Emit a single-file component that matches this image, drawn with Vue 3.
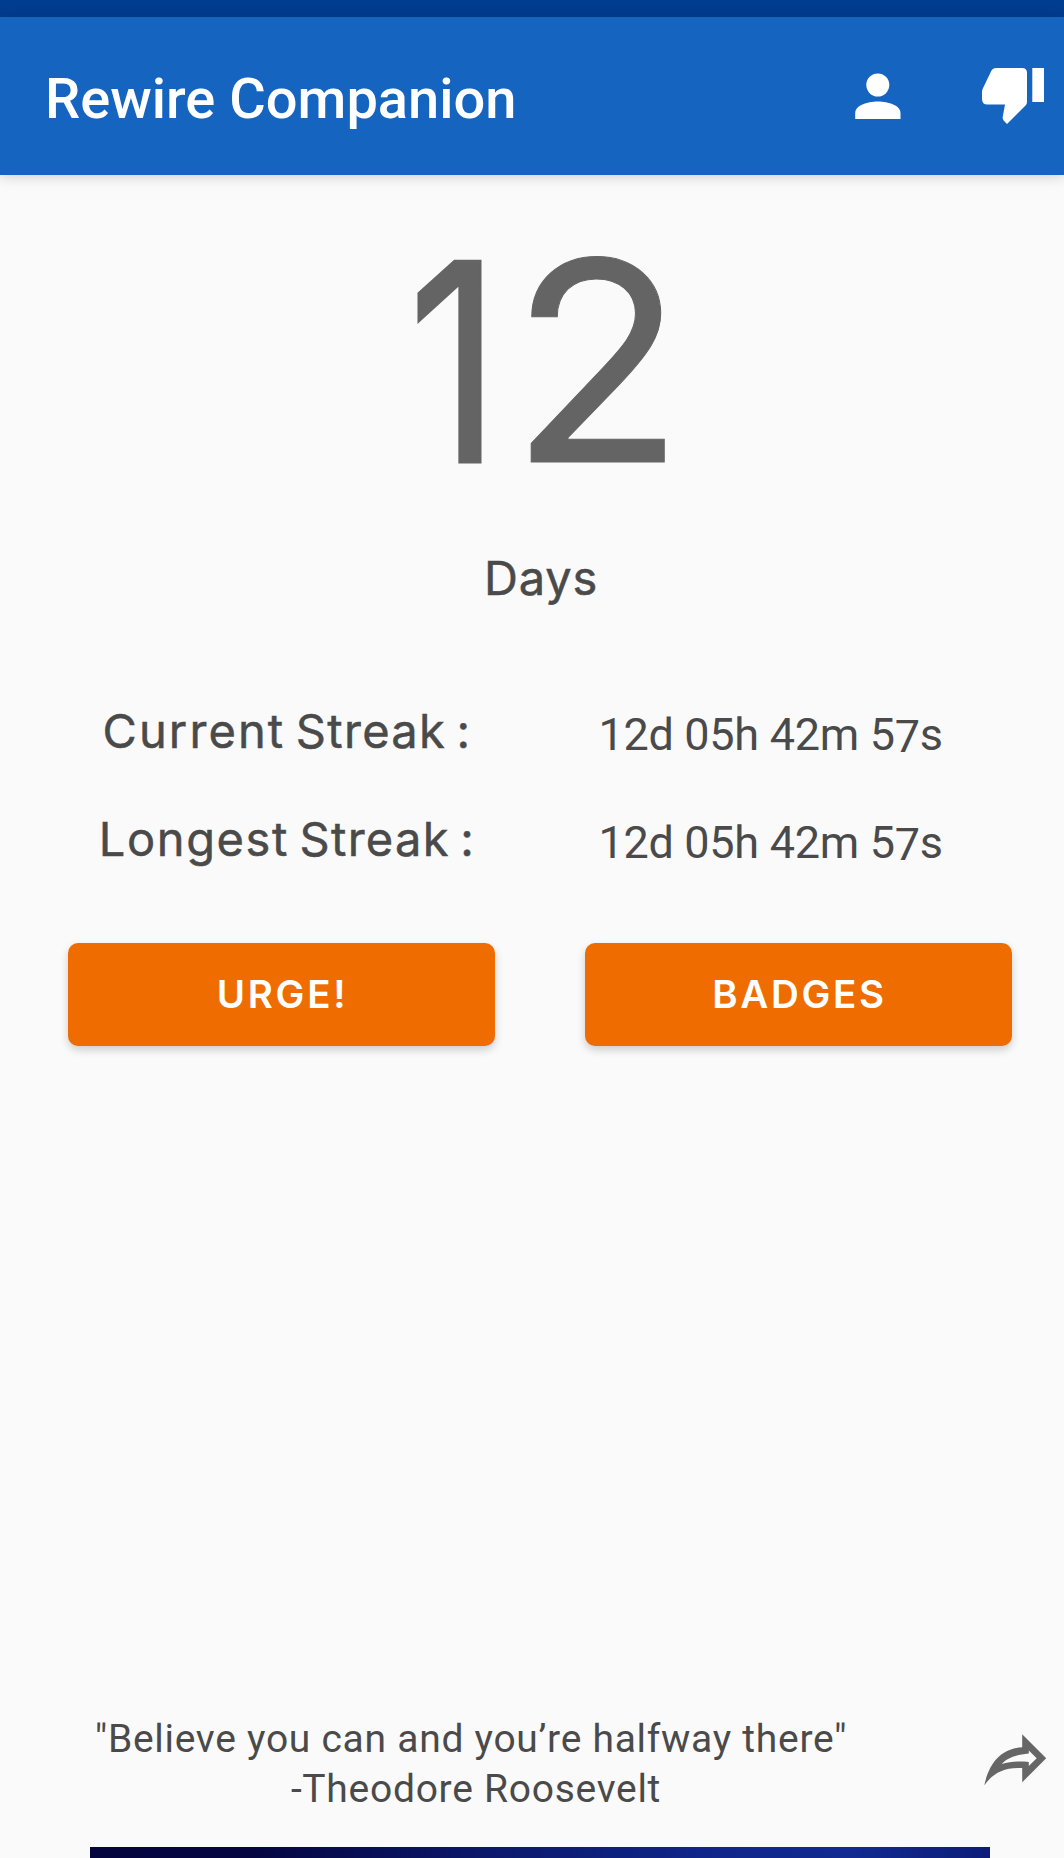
<script setup>
const streaks = [
  { period: 'Current', kind: 'current', lead: '12d 05h 42m 5' },
  { period: 'Longest', kind: 'longest', lead: '12d 05h 42m 5' },
]
const actions = ['URGE!', 'BADGES']
</script>

<template>
  <div class="screen">
    <div class="status"></div>
    <header class="bar">
      <h1 class="title">Rewire Companion</h1>
      <svg class="person" width="46" height="47" viewBox="0 0 46 47" fill="#fff">
        <circle cx="22.8" cy="12" r="11.5" />
        <path d="M.2 46V40C.2 32.5 12 28.500 22.800 28.500S45.500 32.500 45.500 40V46Z" />
      </svg>
      <svg class="thumb" width="64" height="58" viewBox="0 0 64 58" fill="#fff">
        <path d="M15 1H41Q46 1 46 6V35Q46 37 44.500 38.500L26 57 22.600 53.600Q21.500 52 21.700 50L24 37.500H6.500Q1 37.500 1 32V25Q1 23.500 1.600 22L10 4.500Q11.500 1 15 1ZM51.300 1H63V35H51.300Z" />
      </svg>
    </header>

    <main class="content">
      <div class="count"><span class="one">1</span><span class="two">2</span></div>
      <div class="unit">Days</div>

      <div class="streaks">
        <div v-for="s in streaks" :key="s.kind" class="row">
          <span class="label"><span :class="s.kind">{{ s.period }}</span> Streak :</span>
          <span class="value">{{ s.lead }}<span class="drop">7</span>s</span>
        </div>
      </div>

      <div class="actions">
        <button v-for="a in actions" :key="a" class="btn">{{ a }}</button>
      </div>
    </main>

    <footer class="quote">
      <div class="lines">
        <div class="words">"Believe you can and you’re halfway there"</div>
        <div class="author">-Theodore Roosevelt</div>
      </div>
      <svg class="share" width="64" height="54" viewBox="0 0 64 54">
        <path fill="#666" fill-rule="evenodd" d="M38.200 1.300 62.200 25.300 38.200 49.300V35C20 34 9 40 .3 52.300C5 31 16 15.500 38.200 14.300ZM44.800 17.500V20.500C30.500 22 23.500 25 17.700 31C26 28.500 35 28 44.800 29V33L52.700 25.300Z" />
      </svg>
    </footer>
    <div class="banner"></div>
  </div>
</template>

<style>
body { margin: 0; background: #fafafa; }
</style>

<style scoped>
.screen {
  width: 1064px;
  height: 1858px;
  overflow: hidden;
  display: flex;
  flex-direction: column;
  background: #fafafa;
  color: #4a4a4a;
  font-family: Roboto, sans-serif;
}
.status { height: 17px; flex: none; background: #003c8f; }
.bar {
  height: 158px;
  flex: none;
  box-sizing: border-box;
  display: flex;
  align-items: flex-start;
  padding-left: 45px;
  background: #1565c0;
  box-shadow: 0 2px 12px rgba(0, 0, 0, .17);
}
.title {
  margin: 52px 0 0;
  width: 810px;
  font-size: 56px;
  line-height: 60px;
  font-weight: 500;
  color: #fff;
  white-space: nowrap;
}
.person { margin-top: 56px; }
.thumb { margin: 50px 0 0 80px; }
.content { flex: none; height: 1539px; display: flex; flex-direction: column; }
.count {
  margin: 49px 0 0 16px;
  font: 400 276px/276px Inter, sans-serif;
  text-align: center;
  color: #646464;
}
.one, .two { display: inline-block; transform-origin: 50% 238.500px; }
.one { transform: translateX(-2px) scaleX(.82); -webkit-text-stroke: 3px #646464; }
.two { transform: translateX(1px) scale(1.04, 1.01); -webkit-text-stroke: 1px #646464; }
.unit {
  margin: 48px 0 0 18px;
  font: 400 47px/60px Inter, sans-serif;
  letter-spacing: .8px;
  -webkit-text-stroke: .5px #4a4a4a;
  text-align: center;
}
.streaks { margin: 69px 0 0 70px; }
.row {
  display: grid;
  grid-template-columns: 434px 536px;
  height: 108px;
  align-items: center;
  text-align: center;
  white-space: nowrap;
}
.label {
  font: 400 47px/60px Inter, sans-serif;
  letter-spacing: 1.300px;
  word-spacing: -4px;
  -webkit-text-stroke: .5px #4a4a4a;
}
.current { letter-spacing: 2.100px; }
.longest { letter-spacing: 1.600px; }
.value { padding: 7px 3px 0 0; font-size: 45px; line-height: 60px; letter-spacing: -.3px; }
.drop { position: relative; top: 2px; }
.actions { display: flex; gap: 90px; margin: 50px 0 0 68px; }
.btn {
  width: 427px;
  height: 103px;
  padding: 0 0 2px 2px;
  border: 0;
  border-radius: 10px;
  background: #ef6c00;
  color: #fff;
  font: 600 38.500px/60px Inter, sans-serif;
  letter-spacing: 2.700px;
  box-shadow: 0 4px 8px rgba(0, 0, 0, .18);
}
.quote { flex: none; height: 133px; display: flex; }
.lines {
  width: 942px;
  font-size: 39px;
  line-height: 50px;
  letter-spacing: .72px;
  text-align: center;
  white-space: nowrap;
}
.author { padding-left: 10px; }
.share { margin: 19px 0 0 42px; }
.banner {
  flex: none;
  width: 899.500px;
  height: 11px;
  margin-left: 90px;
  background: linear-gradient(90deg, #04043f 0, #050542 18%, #0c1a70 48%, #10268c 70%, #112990 85%, #0d1c78 100%);
}
</style>
